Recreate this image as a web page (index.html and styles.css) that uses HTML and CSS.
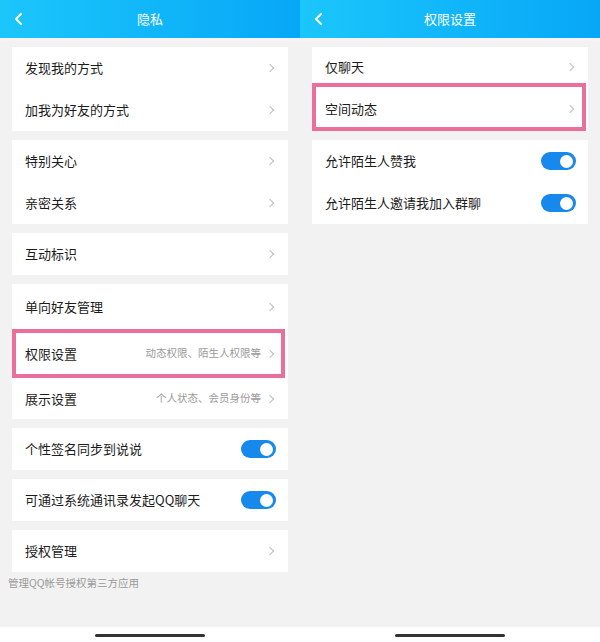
FILE: index.html
```html
<!DOCTYPE html>
<html>
<head>
<meta charset="UTF-8">
<title>隐私 / 权限设置</title>
<link rel="stylesheet" href="styles.css">
</head>
<body>
<div class="shot">
	<!-- 左侧：隐私 -->
	<div class="screen">
		<div class="topbar">
			<svg class="back" width="10" height="14" viewBox="0 0 10 14"><polyline points="7,2 2,7 7,12" fill="none" stroke="#fff" stroke-width="2" stroke-linecap="round" stroke-linejoin="round"/></svg>
			<span class="title">隐私</span>
		</div>
		<div class="band"></div>
		<div class="main">
			<div class="card">
				<div class="row"><span class="label">发现我的方式</span><i class="arrow"></i></div>
				<div class="row"><span class="label">加我为好友的方式</span><i class="arrow"></i></div>
			</div>
			<div class="card">
				<div class="row"><span class="label">特别关心</span><i class="arrow"></i></div>
				<div class="row"><span class="label">亲密关系</span><i class="arrow"></i></div>
			</div>
			<div class="card">
				<div class="row"><span class="label">互动标识</span><i class="arrow"></i></div>
			</div>
			<div class="card">
				<div class="row row-a"><span class="label">单向好友管理</span><i class="arrow"></i></div>
				<div class="row row-b mark"><span class="label">权限设置</span><span class="desc">动态权限、陌生人权限等</span><i class="arrow"></i></div>
				<div class="row row-c"><span class="label">展示设置</span><span class="desc">个人状态、会员身份等</span><i class="arrow"></i></div>
			</div>
			<div class="card">
				<div class="row"><span class="label">个性签名同步到说说</span><span class="switch"></span></div>
			</div>
			<div class="card">
				<div class="row"><span class="label">可通过系统通讯录发起QQ聊天</span><span class="switch"></span></div>
			</div>
			<div class="card">
				<div class="row"><span class="label">授权管理</span><i class="arrow"></i></div>
			</div>
			<p class="note">管理QQ帐号授权第三方应用</p>
		</div>
		<div class="homebar"><span></span></div>
	</div>

	<!-- 右侧：权限设置 -->
	<div class="screen">
		<div class="topbar">
			<svg class="back" width="10" height="14" viewBox="0 0 10 14"><polyline points="7,2 2,7 7,12" fill="none" stroke="#fff" stroke-width="2" stroke-linecap="round" stroke-linejoin="round"/></svg>
			<span class="title">权限设置</span>
		</div>
		<div class="band"></div>
		<div class="main">
			<div class="card">
				<div class="row row-top"><span class="label">仅聊天</span><i class="arrow"></i></div>
				<div class="row row-hl mark"><span class="label">空间动态</span><i class="arrow"></i></div>
			</div>
			<div class="card">
				<div class="row"><span class="label">允许陌生人赞我</span><span class="switch"></span></div>
				<div class="row"><span class="label">允许陌生人邀请我加入群聊</span><span class="switch"></span></div>
			</div>
		</div>
		<div class="homebar"><span></span></div>
	</div>
</div>
</body>
</html>
```

FILE: styles.css
```css
* {
	margin: 0;
	padding: 0;
	box-sizing: border-box;
}

body {
	font: 13px/1.2 "Noto Sans CJK SC", "Noto Sans", sans-serif;
	color: #1c1c1c;
	background: #f2f2f2;
}

.shot {
	display: flex;
	width: 600px;
	height: 642px;
}

.screen {
	width: 300px;
	display: flex;
	flex-direction: column;
}

.topbar {
	height: 38px;
	position: relative;
	display: flex;
	align-items: center;
	justify-content: center;
	background: linear-gradient(90deg, #1bc6fb, #07a7f7);
}

.topbar .back {
	position: absolute;
	left: 14px;
	top: 12px;
}

.topbar .title {
	color: #fff;
	font-size: 13px;
}

.band {
	height: 3px;
	background: #f8f1f6;
}

.main {
	flex: 1;
	padding: 6px 12px 0;
	display: flex;
	flex-direction: column;
	gap: 9px;
}

.card {
	background: #fff;
}

.row {
	height: 42px;
	display: flex;
	align-items: center;
	padding: 0 13px;
	position: relative;
}

.row .label {
	flex: 1;
}

.row .desc {
	font-size: 10.5px;
	color: #9a9a9a;
	margin-right: 6px;
}

.row-a { height: 45px; }
.row-b { height: 49px; }
.row-c { height: 41px; }
.row-top { height: 40px; }
.row-hl { height: 44px; }

/* 粉色标注框 */
.mark::after {
	content: "";
	position: absolute;
	left: 0;
	right: 3px;
	top: 0;
	bottom: 0;
	border: 4px solid #ea6f9b;
}

.row-hl.mark::after {
	top: -4px;
	right: 2px;
}

.arrow {
	width: 6px;
	height: 6px;
	border-top: 1.2px solid #bdbdbd;
	border-right: 1.2px solid #bdbdbd;
	transform: rotate(45deg);
	margin-right: 2px;
}

.switch {
	width: 35px;
	height: 18px;
	border-radius: 9px;
	background: #1789ec;
	position: relative;
	margin-right: -1px;
}

.switch::after {
	content: "";
	position: absolute;
	right: 3px;
	top: 2.5px;
	width: 13px;
	height: 13px;
	border-radius: 50%;
	background: #fff;
}

.note {
	font-size: 10.5px;
	color: #9a9a9a;
	margin: -4px 0 0 -4px;
}

.homebar {
	height: 15px;
	background: #fff;
	display: flex;
	justify-content: center;
	padding-top: 7px;
}

.homebar span {
	width: 110px;
	height: 3px;
	border-radius: 2px;
	background: #333;
}
```
